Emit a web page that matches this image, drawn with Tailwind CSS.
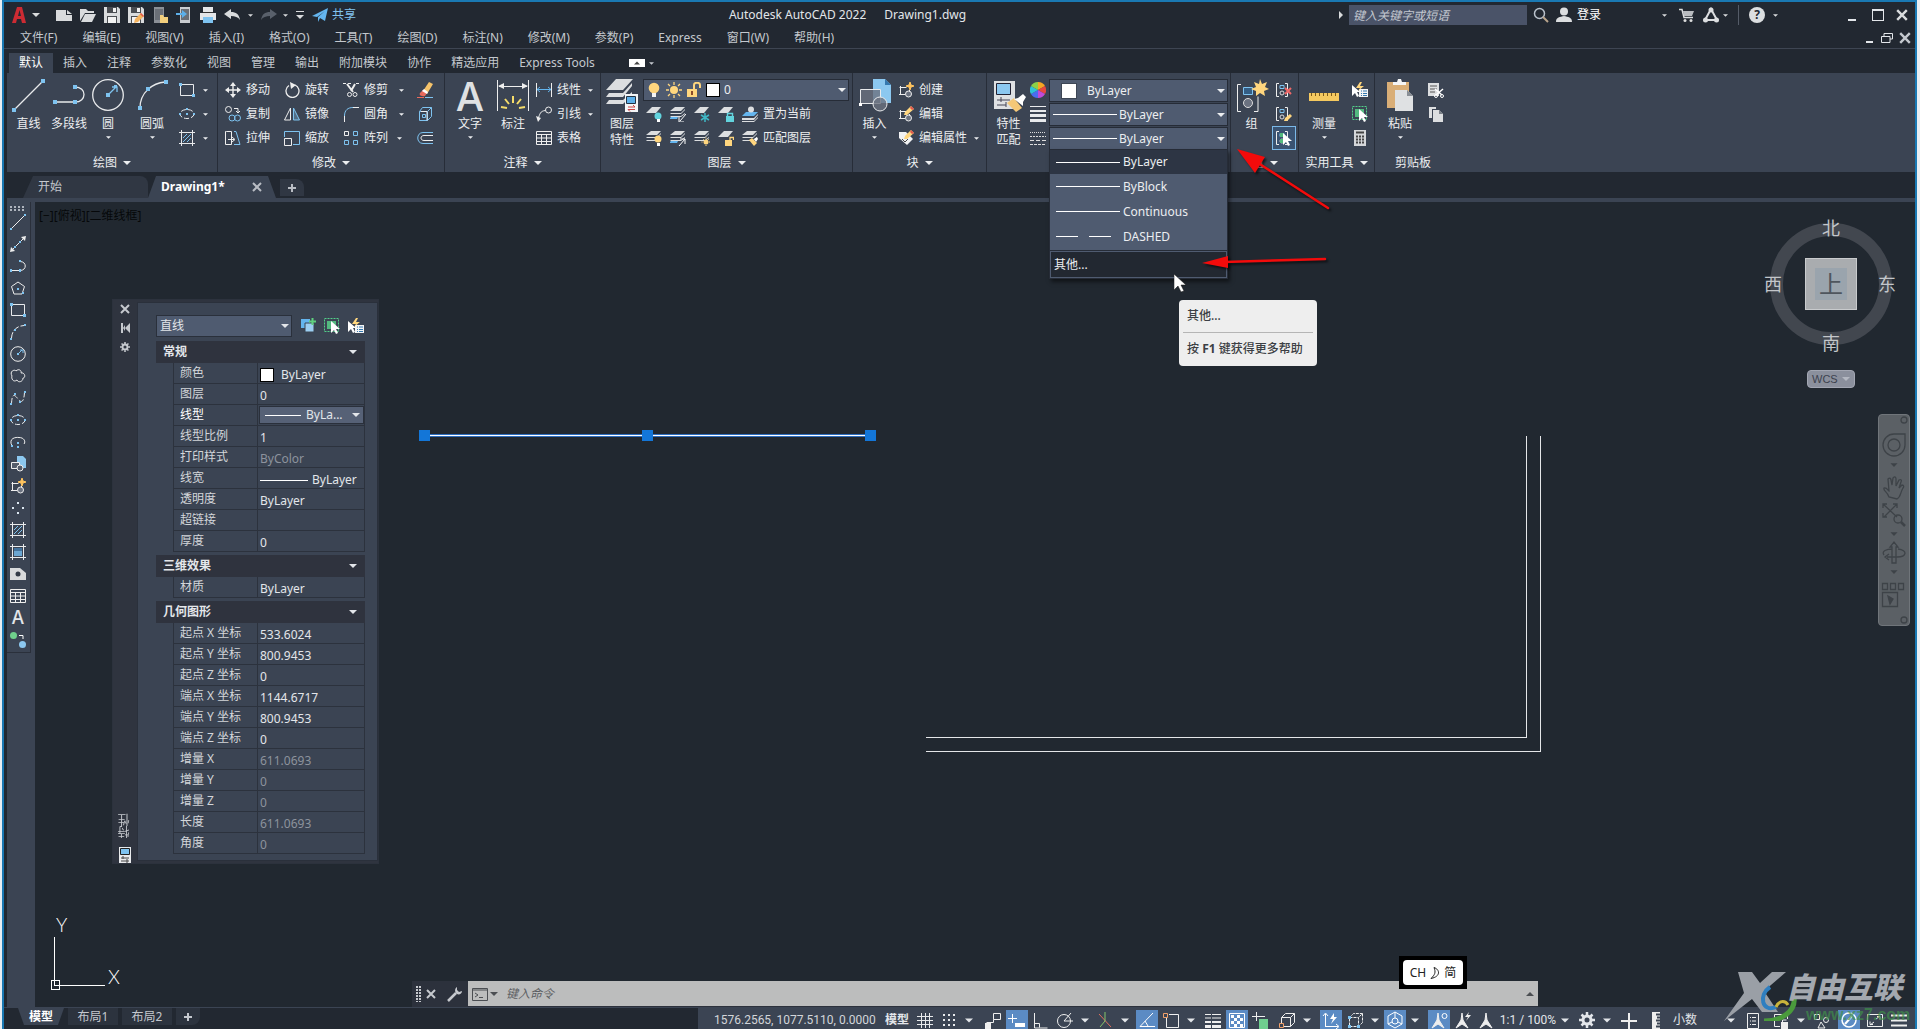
<!DOCTYPE html>
<html lang="zh-CN">
<head>
<meta charset="utf-8">
<title>Autodesk AutoCAD 2022 - Drawing1.dwg</title>
<script src="https://cdn.jsdelivr.net/npm/@tailwindcss/browser@4"></script>
</head>
<body class="bg-[#e9eef2] fill-none font-['Noto_Sans','Noto_Sans_CJK_SC',sans-serif] text-xs leading-4 text-[#e3e6ea]">
<!-- icon library -->
<svg class="hidden" aria-hidden="true">
  <defs>
    <linearGradient id="grad" x1="0" y1="0" x2="0" y2="1"><stop offset="0" stop-color="#3c6f9c"/><stop offset="1" stop-color="#8ec8ee"/></linearGradient>
    <symbol id="caret" viewBox="0 0 8 4"><path d="M0 0h8L4 4z" fill="currentColor"/></symbol>
    <symbol id="x" viewBox="0 0 10 10"><path d="M1 1l8 8M9 1l-8 8" stroke="currentColor" stroke-width="2"/></symbol>
    <symbol id="plus" viewBox="0 0 10 10"><path d="M5 1v8M1 5h8" stroke="currentColor" stroke-width="2"/></symbol>
    <symbol id="new" viewBox="0 0 16 16"><path d="M0 3h10v5h6v6H0zM11 3l5 4h-5z" fill="#d9dbdd"/></symbol>
    <symbol id="open" viewBox="0 0 16 16"><path d="M0 14V2h6l2 2h6v2H5z" fill="#d9dbdd"/><path d="M5 7h11l-4 8H1z" fill="#d9dbdd"/></symbol>
    <symbol id="save" viewBox="0 0 16 16"><path d="M0 0h14l2 2v14H0z" fill="#d9dbdd"/><path d="M3 0h10v6H3zM3 9h10v7H3z" fill="#4a4d52"/><path d="M9 1h3v4H9zM4 10h8v6H4z" fill="#f2f2f2"/></symbol>
    <symbol id="saveas" viewBox="0 0 16 16"><use href="#save"/><path d="M6 16l1-4 6-6 3 3-6 6z" fill="#f5b35e"/><path d="M13 6l3 3-1 1-3-3z" fill="#e2574c"/></symbol>
    <symbol id="sheet" viewBox="0 0 16 16"><path d="M2 0h10v16H2z" fill="#8b9097"/><path d="M3 2h8v11H3z" fill="#6a6f77"/><path d="M8 8h3l1 2h4v6H8z" fill="#f3cf7d"/></symbol>
    <symbol id="mobile" viewBox="0 0 16 16"><path d="M4 0h10v16H4z" fill="#c9ccd0"/><path d="M5 2h8v11H5z" fill="#6a6f77"/><path d="M0 6h6V3l5 4-5 4V8H0z" fill="#5db0ea"/></symbol>
    <symbol id="print" viewBox="0 0 16 16"><path d="M3 0h10v5H3zM0 6h16v7H0z" fill="#e4e6e8"/><path d="M3 5h10v1H3z" fill="#333"/><path d="M3 10h10v6H3z" fill="#7ec3f0"/></symbol>
    <symbol id="undo" viewBox="0 0 16 16"><path d="M0 7l7-5v3c5 0 8 2 9 8-2-3-5-4-9-4v3z" fill="currentColor"/></symbol>
    <symbol id="plane" viewBox="0 0 16 16"><path d="M0 9L16 1l-3 13-5-3-2 4v-5l7-6-8 6z" fill="#64b5ee"/></symbol>
    <symbol id="line" viewBox="0 0 34 34"><path d="M3 31L31 3" stroke="#e8eaec" stroke-width="1.3"/><path d="M0 30h4v4H0zM29 1h4v4h-4z" fill="#7ec3f0"/></symbol>
    <symbol id="pline" viewBox="0 0 34 34"><path d="M3 24h20M23 9c12 0 12 15 0 15" stroke="#e8eaec" stroke-width="1.3"/><path d="M1 22h4v4H1zM21 7h4v4h-4zM21 22h4v4h-4z" fill="#7ec3f0"/></symbol>
    <symbol id="circle" viewBox="0 0 34 34"><circle cx="17" cy="17" r="15.3" stroke="#e8eaec" stroke-width="1.3"/><path d="M17 17l8-8M21 9h5v5" stroke="#7ec3f0" stroke-width="1.3"/><path d="M15 15h4v4h-4zM23 7h3v3h-3z" fill="#7ec3f0"/></symbol>
    <symbol id="arc" viewBox="0 0 34 34"><path d="M5 30C5 14 18 5 30 4" stroke="#e8eaec" stroke-width="1.3"/><path d="M3 28h4v4H3zM11 9h4v4h-4zM29 2h4v4h-4z" fill="#7ec3f0"/></symbol>
    <symbol id="rect" viewBox="0 0 16 16"><path d="M1.500 4V13.500H13M3 2.500H14.500V12" stroke="#e8eaec"/><path d="M0 1h3v3H0zM13 12h3v3h-3z" fill="#7ec3f0"/></symbol>
    <symbol id="ell" viewBox="0 0 16 16"><ellipse cx="8" cy="8" rx="7" ry="4.500" stroke="#e8eaec" stroke-dasharray="5 2"/><path d="M7 7h2v2H7zM0 7h2v2H0zM14 7h2v2h-2zM7 2h2v2H7z" fill="#7ec3f0"/></symbol>
    <symbol id="hatch" viewBox="0 0 16 16"><path d="M2.500 0v16M13.500 0v16M0 2.500h16M0 13.500h16" stroke="#e8eaec"/><path d="M4 8l4-4M4 12l8-8M8 12l4-4" stroke="#7ec3f0"/></symbol>
    <symbol id="move" viewBox="0 0 16 16"><path d="M8 2v12M2 8h12" stroke="#eee" stroke-width="1.400"/><path d="M8 0l3 4H5zM8 16l3-4H5zM0 8l4-3v6zM16 8l-4-3v6z" fill="#eee"/></symbol>
    <symbol id="rot" viewBox="0 0 16 16"><path d="M5 3.500A6.500 6.500 0 1 0 11 3" stroke="#eee" stroke-width="1.300"/><path d="M6 0l6 3-5 4z" fill="#eee"/></symbol>
    <symbol id="trim" viewBox="0 0 16 16"><path d="M0 1.500h3M5 1.500h3M13 1.500h3" stroke="#eee"/><path d="M4 2l6 8M12 2L8 9" stroke="#eee" stroke-width="2"/><circle cx="6.500" cy="12.500" r="2" stroke="#eee"/><circle cx="12" cy="12.500" r="2" stroke="#eee"/></symbol>
    <symbol id="erase" viewBox="0 0 16 16"><path d="M6 9l6-9 4 2-6 10z" fill="#f5c36a"/><path d="M6 8l4 3-2 3c-5 1-6-2-5-3z" fill="#e86a5c"/><path d="M5 9l5 3 1-2-4-3z" fill="#fff"/><path d="M0 15.500h7" stroke="#e86a5c"/><path d="M8 15.500h8" stroke="#7ec3f0"/></symbol>
    <symbol id="copy" viewBox="0 0 16 16"><circle cx="3.500" cy="3.500" r="3" stroke="#eee"/><circle cx="7" cy="12" r="3" stroke="#7ec3f0"/><circle cx="12.500" cy="12" r="3" stroke="#7ec3f0"/><path d="M9 2.500h4V6M11 5l2 2 2-2" stroke="#eee"/></symbol>
    <symbol id="mirror" viewBox="0 0 16 16"><path d="M6.500 2v12h-6z" stroke="#eee"/><path d="M9.500 2v12h6z" stroke="#7ec3f0" fill="#7ec3f055"/></symbol>
    <symbol id="fillet" viewBox="0 0 16 16"><path d="M1.500 10v6M10 1.500h6" stroke="#eee"/><path d="M1.500 10C1.500 4 5 1.500 10 1.500" stroke="#7ec3f0"/></symbol>
    <symbol id="explode" viewBox="0 0 16 16"><path d="M2.500 5.500h8v9h-8zM2.500 5.500l3-4h9l-4 4M14.500 1.500v9l-4 4M5.500 8.500h3v3h-3z" stroke="#7ec3f0"/><path d="M4 5.500h6v9" stroke="#eee"/></symbol>
    <symbol id="stretch" viewBox="0 0 16 16"><path d="M1.500 1.500h5v13h-6v-13zM3 9.500h6M7 7l3 2.500L7 12" stroke="#eee"/><path d="M9 1.500h2l4 13H9" stroke="#7ec3f0"/></symbol>
    <symbol id="scale" viewBox="0 0 16 16"><path d="M.5 8.500h7v7h-7z" stroke="#eee"/><path d="M.5 7V1.500h15v13H9" stroke="#7ec3f0"/></symbol>
    <symbol id="array" viewBox="0 0 16 16"><path d="M1.500 1.500h4v4h-4z" stroke="#eee"/><path d="M10.500 1.500h4v4h-4zM1.500 10.500h4v4h-4zM10.500 10.500h4v4h-4z" stroke="#7ec3f0"/></symbol>
    <symbol id="offset" viewBox="0 0 16 16"><path d="M16 2.500H6c-7 0-7 11 0 11h10" stroke="#7ec3f0"/><path d="M16 5.500H7c-4 0-4 5 0 5h9" stroke="#eee"/></symbol>
    <symbol id="dim" viewBox="0 0 34 34"><path d="M1.500 2v31M32.500 2v31M3 8.500h28" stroke="#eee"/><path d="M2 8l6-3v6zM32 8l-6-3v6z" fill="#eee"/><path d="M17 18v7M9 21l4 5M25 21l-4 5M5 29l6 1M29 29l-6 1" stroke="#f5dc6a" stroke-width="2"/></symbol>
    <symbol id="linear" viewBox="0 0 16 16"><path d="M.5 1v14M15.500 1v14" stroke="#eee"/><path d="M1 7.500h14M4 5L1 7.500 4 10M12 5l3 2.500-3 2.500" stroke="#64b5ee"/></symbol>
    <symbol id="leader" viewBox="0 0 16 16"><circle cx="12.500" cy="4" r="3" stroke="#eee"/><path d="M9.500 4.500C4 5 4 8 2 13" stroke="#eee"/><path d="M0 10l2 6 3-4z" fill="#eee"/></symbol>
    <symbol id="table" viewBox="0 0 16 16"><path d="M.5 1.500h15v13H.5zM.5 4.500h15M.5 8h15M.5 11.500h15M5.500 4v11M10.500 4v11" stroke="#eee"/></symbol>
    <symbol id="layers" viewBox="0 0 34 34"><path d="M11 1h17L18 12H1zM1 19l3-4h14l9-10v3L18 19zM1 26l3-4h14l9-8v3L18 26z" fill="#dcdee0"/><path d="M20 16h13v18H20z" fill="#f4f5f6"/><path d="M21.500 18.500h9v7h-9z" fill="#5db0ea" stroke="#234"/><path d="M23 29h7l-2-2M30 31.500h-7l2 2" stroke="#c44"/></symbol>
    <symbol id="bulb" viewBox="0 0 16 16"><circle cx="8" cy="6" r="5.300" fill="#ffd67e"/><path d="M6 11h4v4H6z" fill="#f4f4f4"/></symbol>
    <symbol id="sun" viewBox="0 0 16 16"><circle cx="8" cy="8" r="4" fill="#ffd67e"/><path d="M8 0v3M8 13v3M0 8h3M13 8h3M2 2l2 2M12 12l2 2M14 2l-2 2M4 12l-2 2" stroke="#ffd67e" stroke-width="1.300"/></symbol>
    <symbol id="unlock" viewBox="0 0 16 16"><path d="M8 7V3c0-3 6-3 6 0v3" stroke="#ffd67e" stroke-width="2"/><path d="M1 7h10v8H1z" fill="#ffd67e"/><path d="M5 9h2v4H5z" fill="#8a4b2a"/></symbol>
    <symbol id="one" viewBox="0 0 16 16"><path d="M6 1h9l-5 6H0z" fill="#dcdee0"/></symbol>
    <symbol id="three" viewBox="0 0 16 16"><path d="M5 1h10l-4 4H0zM0 8l1-1h10l4-4v1l-4 4zM0 11l1-1h10l4-3v1l-4 3z" fill="#dcdee0"/></symbol>
    <symbol id="l1" viewBox="0 0 16 16"><use href="#one"/><circle cx="12" cy="10" r="3.500" fill="#62d3dd"/><path d="M11 13h3v3h-3z" fill="#fff"/></symbol>
    <symbol id="l2" viewBox="0 0 16 16"><use href="#three"/><path d="M0 12l1-1h7l-1 2H0z" fill="#64b5ee"/><path d="M16 8l-6 7M9 11v5h5" stroke="#fff"/></symbol>
    <symbol id="l3" viewBox="0 0 16 16"><use href="#one"/><path d="M11 7v9M7 9l8 5M15 9l-8 5" stroke="#3fb8c6" stroke-width="1.500"/></symbol>
    <symbol id="l4" viewBox="0 0 16 16"><use href="#one"/><path d="M8 10h8v6H8z" fill="#62d3dd"/><path d="M9.500 10V7.500h5V10" stroke="#62d3dd" stroke-width="1.400"/></symbol>
    <symbol id="l5" viewBox="0 0 16 16"><path d="M4 6h12l-4 4H0z" fill="#64b5ee"/><circle cx="9" cy="3.500" r="3" fill="#dcdee0"/><path d="M0 12h12l4-4v1l-4 5H0zM0 15h12l4-4v1l-4 4H0z" fill="#dcdee0"/></symbol>
    <symbol id="l6" viewBox="0 0 16 16"><use href="#three"/><circle cx="12" cy="9" r="3.500" fill="#ffd67e"/><path d="M11 13h3v3h-3z" fill="#fff"/></symbol>
    <symbol id="l7" viewBox="0 0 16 16"><use href="#three"/><path d="M0 12l1-1h7l-1 2H0z" fill="#64b5ee"/><path d="M9 16l6-7M10 9h5v5" stroke="#fff"/></symbol>
    <symbol id="l8" viewBox="0 0 16 16"><use href="#three"/><circle cx="12" cy="12" r="2.500" fill="#ffd67e"/><path d="M12 7.500v1M12 15v1M7.500 12h1M15 12h1M9 9l.7.7M15 9l-.7.7" stroke="#ffd67e"/></symbol>
    <symbol id="l9" viewBox="0 0 16 16"><use href="#one"/><path d="M7 10h7v6H7z" fill="#ffd67e"/><path d="M12 10V7.500h3.500V10" stroke="#ffd67e" stroke-width="1.300"/></symbol>
    <symbol id="l10" viewBox="0 0 16 16"><use href="#three"/><path d="M7 10l3-2 5 5-3 3z" fill="#ffd67e"/><path d="M12 9l3-2 1 2-2 3z" fill="#fff"/></symbol>
    <symbol id="insert" viewBox="0 0 34 34"><path d="M15 1h12l6 6v18H15z" fill="#8cc8f0"/><path d="M27 1l6 6h-6z" fill="#3579b0"/><path d="M2.500 11.500h20v14h-20z" fill="#6b7280cc" stroke="#e8eaec"/><circle cx="22" cy="26" r="7" fill="#6b7280cc" stroke="#e8eaec"/><path d="M1 25h3v3H1z" fill="#fff"/></symbol>
    <symbol id="block" viewBox="0 0 16 16"><path d="M1.500 5.500h7M2.500 4v9M1 12.500h6M11.500 8v3" stroke="#eee"/><circle cx="10.500" cy="12" r="3" fill="#6b7280" stroke="#eee"/></symbol>
    <symbol id="create" viewBox="0 0 16 16"><use href="#block"/><path d="M12 0l1 3 3 1-3 1-1 3-1-3-3-1 3-1z" fill="#ffc45e" stroke="#ffc45e"/></symbol>
    <symbol id="editb" viewBox="0 0 16 16"><use href="#block"/><path d="M6 9l1-3 6-6 3 3-7 6z" fill="#ffd67e"/><path d="M13 0l3 3-2 1-2-2z" fill="#e2574c"/></symbol>
    <symbol id="attr" viewBox="0 0 16 16"><path d="M1 2h7l7 7-6 6-8-7z" fill="#f1f2f3"/><path d="M4 9l3 3 3-3" stroke="#444"/><path d="M6 9l1-3 6-6 3 3-7 6z" fill="#ffd67e"/><path d="M13 0l3 3-2 1-2-2z" fill="#e2574c"/></symbol>
    <symbol id="match" viewBox="0 0 34 34"><path d="M2 3h21v28H2z" fill="#dfe1e3"/><path d="M4.500 5.500h14v11h-14z" fill="#8cc8f0" stroke="#223"/><path d="M5 22h13M5 27h9M9 19v5M14 24v5" stroke="#445"/><path d="M15 25l7-5 8 10-6 4z" fill="#f5c878"/><path d="M22 21l4-1 5-4 3 3-3 5v4z" fill="#fff"/></symbol>
    <symbol id="wheel" viewBox="0 0 16 16"><path d="M8 8V0a8 8 0 0 1 7 4z" fill="#f5a623"/><path d="M8 8l7-4a8 8 0 0 1 0 8z" fill="#e8473f"/><path d="M8 8l7 4a8 8 0 0 1-7 4z" fill="#c04bd8"/><path d="M8 8v8a8 8 0 0 1-7-4z" fill="#4a6df0"/><path d="M8 8l-7 4a8 8 0 0 1 0-8z" fill="#2fc3d8"/><path d="M8 8L1 4a8 8 0 0 1 7-4z" fill="#8bd048"/></symbol>
    <symbol id="lw" viewBox="0 0 16 16"><path d="M0 .5h16" stroke="#e8eaec"/><path d="M0 5h16" stroke="#e8eaec" stroke-width="2"/><path d="M0 9.500h16" stroke="#e8eaec" stroke-width="3"/><path d="M0 14.500h16" stroke="#e8eaec" stroke-width="3"/></symbol>
    <symbol id="lt" viewBox="0 0 16 16"><path d="M0 2.500h16" stroke="#ddd" stroke-dasharray="1 1"/><path d="M0 6.500h16" stroke="#ddd" stroke-dasharray="2 1"/><path d="M0 10.500h16" stroke="#ddd" stroke-dasharray="4 2"/><path d="M0 14.500h16" stroke="#ddd" stroke-dasharray="3 1"/></symbol>
    <symbol id="group" viewBox="0 0 34 34"><path d="M6 6.500H2.500v27H6M19 33.500h4v-15" stroke="#eee"/><path d="M8.500 9.500h9v7h-9z" fill="#345e85" stroke="#7ec3f0"/><circle cx="13" cy="25" r="4.500" fill="#6b7280" stroke="#ddd"/><path d="M25 1l2 5 5-2-2 5 4 2-5 2 1 5-5-3-4 3v-5l-5-2 5-2-2-5 5 2z" fill="#ffd67e"/></symbol>
    <symbol id="grp" viewBox="0 0 16 16"><path d="M3 1.500H.5v13H3M9 1.500h2.500v13H9" stroke="#eee"/><path d="M4 3.500h4v3H4z" stroke="#7ec3f0"/><circle cx="6" cy="11" r="2" stroke="#ddd"/></symbol>
    <symbol id="ungrp" viewBox="0 0 16 16"><use href="#grp"/><path d="M9 6l6 6M15 6l-6 6" stroke="#f06868" stroke-width="2"/></symbol>
    <symbol id="grped" viewBox="0 0 16 16"><use href="#grp"/><path d="M8 15l1-3 5-4 2 2-5 5z" fill="#ffd67e"/></symbol>
    <symbol id="arrow" viewBox="0 0 16 16"><path d="M7 3v12l3-3 2 4 2-1-2-4h4z" fill="#fff"/></symbol>
    <symbol id="grpsel" viewBox="0 0 16 16"><use href="#grp"/><path d="M4 3h4v4H4zM4 9h4v4H4z" fill="#53b97f"/><use href="#arrow"/></symbol>
    <symbol id="ruler" viewBox="0 0 34 34"><path d="M2 15h30v8H2z" fill="#f5c95f"/><path d="M4.500 15v3M8.500 15v3M12.500 15v3M16.500 15v3M20.500 15v3M24.500 15v3M28.500 15v3" stroke="#7c5a1c"/></symbol>
    <symbol id="qsel" viewBox="0 0 16 16"><path d="M7 7h9v8H7z" fill="#f4f5f6"/><path d="M9 9h1M11 9h4M9 11.500h1M11 11.500h4M9 13.500h1M11 13.500h4" stroke="#3579b0"/><path d="M8 0L4 6h4L6 9l6-5H8l2-4z" fill="#ffd67e"/><path d="M0 3v11l3-3 2 4 2-1-2-4h3z" fill="#fff"/></symbol>
    <symbol id="selall" viewBox="0 0 16 16"><path d="M.5 .5h14v13H.5z" stroke="#53d08a" stroke-dasharray="2 1"/><path d="M3 3h9v8H3z" fill="#53b97f"/><use href="#arrow"/></symbol>
    <symbol id="calc" viewBox="0 0 16 16"><path d="M2 0h12v16H2z" fill="#d5d7da"/><path d="M4 2.500h8" stroke="#444" stroke-width="2"/><path d="M4 6.500h8M4 9.500h8M4 12.500h8" stroke="#444" stroke-width="2" stroke-dasharray="2 1"/></symbol>
    <symbol id="paste" viewBox="0 0 34 34"><path d="M4 4h22v26H4z" fill="#d9ae77"/><path d="M10 7V4h4l1-3h3l1 3h4v3z" fill="#f4f5f6"/><path d="M12 12h12l6 6v15H12z" fill="#dfe1e3"/><path d="M24 12l6 6h-6z" fill="#8a8f96"/></symbol>
    <symbol id="cut" viewBox="0 0 16 16"><path d="M0 1h11v13H0z" fill="#dcdee0"/><path d="M2 4h7M2 7h7M2 10h5" stroke="#555"/><path d="M7 7l7 6M15 7l-7 6" stroke="#fff" stroke-width="1.500"/><circle cx="8" cy="14" r="1.500" stroke="#fff"/><circle cx="14" cy="14" r="1.500" stroke="#fff"/></symbol>
    <symbol id="clip" viewBox="0 0 16 16"><path d="M1 1h7v2H4v9H1z" fill="#dcdee0"/><path d="M5 4h6l4 4v8H5z" fill="#dcdee0"/><path d="M11 4l4 4h-4z" fill="#7a8088"/></symbol>
    <!-- draw toolbar -->
    <symbol id="t1" viewBox="0 0 16 16"><path d="M1.500 14.500l13-13" stroke="#eee"/><path d="M0 14h2v2H0zM14 0h2v2h-2z" fill="#7ec3f0"/></symbol>
    <symbol id="t2" viewBox="0 0 16 16"><path d="M2 14L14 2" stroke="#eee"/><path d="M0 16l1-5 4 4zM16 0l-5 1 4 4z" fill="#eee"/><path d="M4 10h2v2H4zM9 5h2v2H9z" fill="#7ec3f0"/></symbol>
    <symbol id="t3" viewBox="0 0 16 16"><path d="M1 12.500h9M10 3.500c7 0 7 9 0 9" stroke="#eee"/><path d="M0 11h2v3H0zM9 2h2v2H9zM9 11h2v3H9z" fill="#7ec3f0"/></symbol>
    <symbol id="t4" viewBox="0 0 16 16"><path d="M8 2l6.500 4.500L12 14H4L1.500 6.500z" stroke="#eee"/><path d="M7 8h2v2H7zM12 12h2v2h-2z" fill="#7ec3f0"/></symbol>
    <symbol id="t6" viewBox="0 0 16 16"><path d="M1.500 14C2 6 7 2 14 1.500" stroke="#eee" stroke-dasharray="6 2"/><path d="M0 14h2v2H0zM14 0h2v2h-2zM4 5h2v2H4z" fill="#7ec3f0"/></symbol>
    <symbol id="t7" viewBox="0 0 16 16"><circle cx="8" cy="8" r="7.300" stroke="#eee"/><path d="M8 8l4-4M10 4h3v3" stroke="#7ec3f0"/><path d="M7 7h2v2H7z" fill="#7ec3f0"/></symbol>
    <symbol id="t8" viewBox="0 0 16 16"><path d="M2 8C-1 3 5 1 6 3c3-3 6 0 5 2 4-1 5 5 2 5 0 4-5 5-6 2-4 3-6-2-5-4z" stroke="#eee"/></symbol>
    <symbol id="t9" viewBox="0 0 16 16"><path d="M1.500 14C2 2 5 5 8 9s6 4 6.500-7" stroke="#eee" stroke-dasharray="6 2"/><path d="M0 13h2v2H0zM4 3h2v2H4zM9 11h2v2H9zM14 1h2v2h-2z" fill="#7ec3f0"/></symbol>
    <symbol id="t11" viewBox="0 0 16 16"><path d="M2 12C-2 4 6 3 9 3.500c5 0 7 4 5 6.500" stroke="#eee"/><path d="M7 8h2v2H7zM7 12h2v2H7zM1 11h2v2H1z" fill="#7ec3f0"/></symbol>
    <symbol id="t12" viewBox="0 0 16 16"><path d="M7 0h6l3 3v9H7z" fill="#8cc8f0"/><path d="M1.500 6.500h8v6h-8z" fill="#555d6b" stroke="#eee"/><circle cx="10" cy="12" r="3" fill="#555d6b" stroke="#eee"/></symbol>
    <symbol id="t14" viewBox="0 0 16 16"><path d="M7 2h2v2H7zM2 7h2v2H2zM12 7h2v2h-2zM7 12h2v2H7z" fill="#dbe7f0"/></symbol>
    <symbol id="t16" viewBox="0 0 16 16"><path d="M4 4h8v8H4z" fill="#6ba6d2"/><path d="M4 4h8v3H4z" fill="#42729c"/><path d="M2.500 0v16M13.500 0v16M0 2.500h16M0 13.500h16" stroke="#e8eaec"/></symbol>
    <symbol id="t17" viewBox="0 0 16 16"><path d="M0 2h10l6 5v7H0z" fill="#d9dbdd"/><circle cx="8" cy="8" r="2.500" fill="#333b48"/></symbol>
    <symbol id="t20" viewBox="0 0 16 16"><circle cx="3.500" cy="3.500" r="3.500" fill="#6fd08c"/><circle cx="12.500" cy="12.500" r="3.500" fill="#8cc8f0"/><path d="M9 3.500h4V7" stroke="#fff"/></symbol>
    <!-- palette and window glyphs -->
    <symbol id="tog" viewBox="0 0 16 16"><path d="M1 1h9v9H1z" fill="#64b5ee"/><path d="M5 5h9v9H5z" fill="#9ccff2" stroke="#3b4453"/><path d="M12.500 0v7M9 3.500h7" stroke="#5fd07f" stroke-width="2"/></symbol>
    <symbol id="gear" viewBox="0 0 16 16"><circle cx="8" cy="8" r="4" stroke="currentColor" stroke-width="3"/><path d="M8 0v3M8 13v3M0 8h3M13 8h3M2.500 2.500l2 2M11.500 11.500l2 2M13.500 2.500l-2 2M4.500 11.500l-2 2" stroke="currentColor" stroke-width="2.500"/></symbol>
    <symbol id="search" viewBox="0 0 16 16"><circle cx="6.500" cy="6.500" r="5" stroke="#b9c2cc" stroke-width="1.500"/><path d="M10 10l5 5" stroke="#b9a48c" stroke-width="2"/></symbol>
    <symbol id="user" viewBox="0 0 16 16"><circle cx="8" cy="4.500" r="4" fill="#dcdee0"/><path d="M0 15c0-5 4-5 8-6 4 1 8 1 8 6z" fill="#dcdee0"/></symbol>
    <symbol id="cart" viewBox="0 0 16 16"><path d="M0 2.500h3l2 8h9" stroke="#dcdee0" stroke-width="1.500"/><path d="M4 4h11l-2 5H5z" fill="#b9bcc0"/><circle cx="6" cy="13.500" r="1.500" fill="#ddd"/><circle cx="12" cy="13.500" r="1.500" fill="#ddd"/></symbol>
    <symbol id="app" viewBox="0 0 16 16"><path d="M8 2L2 13h12z" stroke="#dcdee0" stroke-width="2"/><circle cx="8" cy="3" r="2.500" fill="#dcdee0"/><circle cx="2.500" cy="13" r="2.500" fill="#dcdee0"/><circle cx="13.500" cy="13" r="2.500" fill="#dcdee0"/></symbol>
    <symbol id="wrench" viewBox="0 0 16 16"><path d="M1 15l8-8" stroke="#c6c9ce" stroke-width="2.500"/><path d="M10 1c-3 2-2 6 0 7s5 0 5-3l-3 1-2-2z" fill="#c6c9ce"/></symbol>
    <!-- status bar glyphs, 22 x 20 -->
    <symbol id="s1" viewBox="0 0 22 20"><path d="M7.500 3v15M11.500 3v15M15.500 3v15M3 6.500h16M3 10.500h16M3 14.500h16" stroke="#e8eaec"/></symbol>
    <symbol id="s2" viewBox="0 0 22 20"><path d="M5 5h14M5 10h14M5 15h14" stroke="#e8eaec" stroke-width="2" stroke-dasharray="2 3"/></symbol>
    <symbol id="s3" viewBox="0 0 22 20"><path d="M11.500 3.500h7v6h-7zM11.500 9.500v3h-7" stroke="#eee"/><path d="M3 13h6v6H3z" fill="#eee"/></symbol>
    <symbol id="s4" viewBox="0 0 22 20"><path d="M6.500 4v9M2 8.500h9" stroke="#fff"/><path d="M9 13h10v4H9z" fill="#fff"/></symbol>
    <symbol id="s5" viewBox="0 0 22 20"><path d="M4.500 3v15h13M4.500 13.500h5v4" stroke="#eee"/></symbol>
    <symbol id="s6" viewBox="0 0 22 20"><circle cx="10" cy="11" r="6.500" stroke="#eee"/><path d="M10 11h9M10 11l7-8" stroke="#eee"/></symbol>
    <symbol id="s7" viewBox="0 0 22 20"><path d="M5 4l12 13" stroke="#e0705e"/><path d="M11 2v9l-5 6" stroke="#84c46a"/></symbol>
    <symbol id="s8" viewBox="0 0 22 20"><path d="M17 3L4 16.500h15M9 11l3 5" stroke="#fff"/></symbol>
    <symbol id="s9" viewBox="0 0 22 20"><path d="M6.500 8v9.500h12v-13H9" stroke="#eee"/><path d="M3.500 3.500h4v4h-4z" stroke="#f0a06a"/></symbol>
    <symbol id="s10" viewBox="0 0 22 20"><path d="M3 4.500h16M3 8h16" stroke="#eee"/><path d="M3 12h16" stroke="#eee" stroke-width="2"/><path d="M3 16.500h16" stroke="#eee" stroke-width="3"/><path d="M9.500 3v16" stroke="#3b4453"/></symbol>
    <symbol id="s11" viewBox="0 0 22 20"><path d="M3.500 3.500h15v14h-15z" stroke="#fff"/><path d="M5 6.500h12M5 12.500h12" stroke="#fff" stroke-width="3" stroke-dasharray="3 3"/><path d="M8 9.500h9M8 15.500h9" stroke="#fff" stroke-width="3" stroke-dasharray="3 3"/></symbol>
    <symbol id="s12" viewBox="0 0 22 20"><path d="M6.500 2v9M2 6.500h13" stroke="#eee"/><path d="M9 9h9v10H9z" fill="#6fcf8f"/></symbol>
    <symbol id="s13" viewBox="0 0 22 20"><path d="M5.500 7.500h9v9h-9zM5.500 7.500l4-4h9l-4 4M18.500 3.500v9l-4 4" stroke="#eee"/><path d="M3.500 13.500h4v4h-4z" stroke="#f0a06a" fill="#3b4453"/></symbol>
    <symbol id="s14" viewBox="0 0 22 20"><path d="M5.500 17V4M3 6l2.500-3L8 6M5 16.500h13M16 14l3 2.500-3 2.500" stroke="#fff"/><path d="M14 3l-4 6h3l-2 5 6-7h-3z" fill="#fff"/></symbol>
    <symbol id="s15" viewBox="0 0 22 20"><path d="M5.500 7.500h9v9h-9zM5.500 7.500l4-4h9l-4 4M18.500 3.500v9l-4 4" stroke="#eee" stroke-dasharray="3 1"/><path d="M4 6h3v3H4zM4 15h3v3H4zM13 15h3v3h-3z" fill="#7ec3f0"/></symbol>
    <symbol id="s16" viewBox="0 0 22 20"><path d="M11 2l7 4v8l-7 4-7-4V6z" stroke="#fff"/><circle cx="11" cy="11" r="3" stroke="#fff"/><path d="M11 2v6M4 14l4-2M18 14l-4-2" stroke="#fff"/></symbol>
    <symbol id="man" viewBox="0 0 22 20"><path d="M10 3l-1 7-5 8 6-4 6 4-5-8z" fill="#eee" stroke="#eee"/></symbol>
    <symbol id="s17" viewBox="0 0 22 20"><use href="#man"/><circle cx="16.500" cy="6" r="2.500" stroke="#fff"/></symbol>
    <symbol id="s18" viewBox="0 0 22 20"><use href="#man"/><path d="M17 2l-4 5h3l-2 4 5-6h-3z" fill="#eee"/></symbol>
    <symbol id="s20" viewBox="0 0 22 20"><path d="M11 3v16M3 11h16" stroke="#eee" stroke-width="2"/></symbol>
    <symbol id="s21" viewBox="0 0 22 20"><path d="M8 2h8v17H8z" fill="#eee"/><path d="M12 4.500h4M13 7.500h3M12 10.500h4M13 13.500h3M12 16.500h4" stroke="#3b4453" stroke-width="2"/></symbol>
    <symbol id="s22" viewBox="0 0 22 20"><path d="M5.500 3.500h11v15h-11zM8 7.500h1M10 7.500h4M8 11h1M10 11h4M8 14.500h1M10 14.500h4" stroke="#eee"/></symbol>
    <symbol id="s23" viewBox="0 0 22 20"><path d="M10 16.500H4.500v-12h13V9" stroke="#eee"/><path d="M11 12h7v7h-7z" fill="#eee"/><path d="M12.500 12v-2h4" stroke="#eee"/></symbol>
    <symbol id="s24" viewBox="0 0 22 20"><path d="M4.500 4.500h5v5h-5zM11 12l4 6H8z" stroke="#eee"/><circle cx="16" cy="10" r="2.500" stroke="#eee"/></symbol>
    <symbol id="s25" viewBox="0 0 22 20"><circle cx="11" cy="10" r="7" stroke="#fff" stroke-width="1.500"/><path d="M7 14l7-8" stroke="#fff" stroke-width="2"/></symbol>
    <symbol id="s26" viewBox="0 0 22 20"><path d="M3.500 4.500h15v12h-15zM12 9l4-3M13 6.500h3v3M10 12l-4 3M9 14.500H6v-3" stroke="#eee"/></symbol>
    <symbol id="s27" viewBox="0 0 22 20"><path d="M3 5.500h16M3 10.500h16M3 15.500h16" stroke="#eee" stroke-width="2"/></symbol>
  </defs>
</svg>

<div class="ml-0.5 mr-[3px] flex h-screen flex-col overflow-hidden border-x-2 border-t-2 border-[#1a79b3] bg-[#222831]">

  <!-- title bar -->
  <header class="flex h-[26px] shrink-0 items-center justify-between">
    <div class="flex items-center pl-2 text-[#d9dbdd]">
      <button class="flex items-center gap-1" aria-label="应用程序菜单"><svg class="size-4" viewBox="0 0 16 16"><path d="M0 16L5 0h5l4 16h-4l-1-4H5l-1 4zM6 9h3L7.500 3z" fill="#cc2b33" fill-rule="evenodd"/></svg><svg class="h-1 w-2"><use href="#caret"/></svg></button>
      <div class="ml-4 flex gap-2 [&_svg]:size-4">
        <button aria-label="新建"><svg><use href="#new"/></svg></button>
        <button aria-label="打开"><svg><use href="#open"/></svg></button>
        <button aria-label="保存"><svg><use href="#save"/></svg></button>
        <button aria-label="另存为"><svg><use href="#saveas"/></svg></button>
        <button aria-label="从 Web 打开"><svg><use href="#sheet"/></svg></button>
        <button aria-label="保存到 Web"><svg><use href="#mobile"/></svg></button>
        <button aria-label="打印"><svg><use href="#print"/></svg></button>
        <button aria-label="放弃"><svg><use href="#undo"/></svg></button>
      </div>
      <svg class="ml-2 h-[3px] w-[5px]"><use href="#caret"/></svg>
      <button class="ml-2 text-[#59606b]" aria-label="重做"><svg class="size-4 -scale-x-100"><use href="#undo"/></svg></button>
      <svg class="ml-1.5 h-[3px] w-[5px]"><use href="#caret"/></svg>
      <button class="ml-2 border-t border-[#d9dbdd] pt-[3px]" aria-label="自定义"><svg class="h-1 w-2"><use href="#caret"/></svg></button>
      <button class="ml-2 flex items-center gap-1 text-[#82c4f0]"><svg class="size-4"><use href="#plane"/></svg>共享</button>
    </div>
    <h1 class="flex gap-[18px]"><span>Autodesk AutoCAD 2022</span><span>Drawing1.dwg</span></h1>
    <div class="flex items-center pr-[7px] text-[#d9dbdd]">
      <svg class="h-2 w-1" viewBox="0 0 4 8"><path d="M0 0l4 4-4 4z" fill="currentColor"/></svg>
      <input class="ml-1.5 h-5 w-[178px] bg-[#4a5368] px-1 italic outline-none placeholder:text-[#c3c8d0]" placeholder="键入关键字或短语" aria-label="搜索">
      <svg class="ml-1.5 size-4"><use href="#search"/></svg>
      <button class="ml-[7px] flex items-center gap-[5px] text-white"><svg class="size-4"><use href="#user"/></svg>登录</button>
      <svg class="ml-[61px] h-[3px] w-[5px]"><use href="#caret"/></svg>
      <svg class="ml-3 size-4"><use href="#cart"/></svg>
      <svg class="ml-2 size-4"><use href="#app"/></svg>
      <svg class="ml-1 h-[3px] w-[5px]"><use href="#caret"/></svg>
      <span class="ml-2.5 h-5 w-px bg-[#555c68]"></span>
      <button class="ml-2.5 size-4 rounded-full bg-[#dcdee0] text-center font-bold leading-4 text-[#222831]">?</button>
      <svg class="ml-2 h-[3px] w-[5px]"><use href="#caret"/></svg>
      <button class="ml-[70px] mt-[9px] h-0.5 w-2 bg-[#e3e6ea]" aria-label="最小化"></button>
      <button class="ml-4 size-3 border border-t-2 border-[#e3e6ea]" aria-label="最大化"></button>
      <button class="ml-3" aria-label="关闭"><svg class="size-3"><use href="#x"/></svg></button>
    </div>
  </header>

  <!-- menu bar -->
  <nav class="flex h-[21px] shrink-0 items-center border-b border-[#3e4552] pl-4 pr-1 text-[#c4c8ce]">
    <div class="flex gap-[25px]">
      <a href="#">文件(F)</a><a href="#">编辑(E)</a><a href="#">视图(V)</a><a href="#">插入(I)</a><a href="#">格式(O)</a><a href="#">工具(T)</a><a href="#">绘图(D)</a><a href="#">标注(N)</a><a href="#">修改(M)</a><a href="#">参数(P)</a><a href="#">Express</a><a href="#">窗口(W)</a><a href="#">帮助(H)</a>
    </div>
    <button class="ml-auto mt-2 h-0.5 w-[7px] bg-[#e3e6ea]" aria-label="最小化图形"></button>
    <button class="ml-2" aria-label="还原图形"><svg class="size-3" viewBox="0 0 12 12" stroke="#e3e6ea"><path d="M3 4V1.500h8.500V7H9M.5 4.500H9v6H.5z"/></svg></button>
    <button class="ml-1.5" aria-label="关闭图形"><svg class="size-3"><use href="#x"/></svg></button>
  </nav>

  <!-- ribbon tabs -->
  <nav class="mt-1 flex h-5 shrink-0 items-center pl-[5px] text-[#c4c8ce]">
    <a href="#" class="flex h-full items-center bg-[#3b4453] px-2.5 text-white">默认</a>
    <a href="#" class="px-2.5">插入</a><a href="#" class="px-2.5">注释</a><a href="#" class="px-2.5">参数化</a><a href="#" class="px-2.5">视图</a><a href="#" class="px-2.5">管理</a><a href="#" class="px-2.5">输出</a><a href="#" class="px-2.5">附加模块</a><a href="#" class="px-2.5">协作</a><a href="#" class="px-2.5">精选应用</a><a href="#" class="px-2.5">Express Tools</a>
    <button class="ml-6 flex h-2 w-4 items-center justify-center bg-white" aria-label="最小化功能区"><svg class="h-1 w-1.5 rotate-180 text-[#444]"><use href="#caret"/></svg></button>
    <svg class="ml-1 h-[3px] w-[5px]"><use href="#caret"/></svg>
  </nav>

  <!-- ribbon -->
  <div class="relative z-20 ml-[3px] flex h-[99px] shrink-0 bg-[#3b4453] text-[#eceef0] [&_section]:flex [&_section]:flex-col [&_section]:border-r [&_section]:border-[#272d38] [&_h2]:flex [&_h2]:h-[19px] [&_h2]:items-center [&_h2]:justify-center [&_h2]:gap-1.5">
    <section class="w-[211px]">
      <div class="flex h-20 pt-[5px]">
        <button class="flex w-[43px] flex-col items-center"><svg class="size-[34px]"><use href="#line"/></svg><span class="mt-1">直线</span></button>
        <button class="flex w-[38px] flex-col items-center"><svg class="size-[34px]"><use href="#pline"/></svg><span class="mt-1 whitespace-nowrap">多段线</span></button>
        <button class="flex w-10 flex-col items-center"><svg class="size-[34px]"><use href="#circle"/></svg><span class="mt-1">圆</span><svg class="mt-1 h-[3px] w-[5px]"><use href="#caret"/></svg></button>
        <button class="flex w-12 flex-col items-center"><svg class="size-[34px]"><use href="#arc"/></svg><span class="mt-1">圆弧</span><svg class="mt-1 h-[3px] w-[5px]"><use href="#caret"/></svg></button>
        <div class="pl-[3px] [&_button]:flex [&_button]:h-6 [&_button]:items-center [&_button]:gap-2">
          <button aria-label="矩形"><svg class="size-4"><use href="#rect"/></svg><svg class="h-[3px] w-[5px]"><use href="#caret"/></svg></button>
          <button aria-label="椭圆"><svg class="size-4"><use href="#ell"/></svg><svg class="h-[3px] w-[5px]"><use href="#caret"/></svg></button>
          <button aria-label="图案填充"><svg class="size-4"><use href="#hatch"/></svg><svg class="h-[3px] w-[5px]"><use href="#caret"/></svg></button>
        </div>
      </div>
      <h2>绘图<svg class="h-1 w-2"><use href="#caret"/></svg></h2>
    </section>
    <section class="w-[227px]">
      <div class="grid h-20 grid-cols-[59px_59px_74px_20px] content-start pl-[7px] pt-[5px] [&_button]:flex [&_button]:h-6 [&_button]:items-center [&_button]:gap-[5px]">
        <button><svg class="size-4"><use href="#move"/></svg>移动</button><button><svg class="size-4"><use href="#rot"/></svg>旋转</button><button><svg class="size-4"><use href="#trim"/></svg>修剪<svg class="ml-1.5 h-[3px] w-[5px]"><use href="#caret"/></svg></button><button aria-label="删除"><svg class="size-4"><use href="#erase"/></svg></button>
        <button><svg class="size-4"><use href="#copy"/></svg>复制</button><button><svg class="size-4"><use href="#mirror"/></svg>镜像</button><button><svg class="size-4"><use href="#fillet"/></svg>圆角<svg class="ml-1.5 h-[3px] w-[5px]"><use href="#caret"/></svg></button><button aria-label="分解"><svg class="size-4"><use href="#explode"/></svg></button>
        <button><svg class="size-4"><use href="#stretch"/></svg>拉伸</button><button><svg class="size-4"><use href="#scale"/></svg>缩放</button><button><svg class="size-4"><use href="#array"/></svg>阵列<svg class="ml-1 h-[3px] w-[5px]"><use href="#caret"/></svg></button><button aria-label="偏移"><svg class="size-4"><use href="#offset"/></svg></button>
      </div>
      <h2>修改<svg class="h-1 w-2"><use href="#caret"/></svg></h2>
    </section>
    <section class="w-[156px]">
      <div class="flex h-20 pt-[5px]">
        <button class="flex w-[50px] flex-col items-center"><span class="h-[34px] font-['Inter',sans-serif] text-[40px] font-medium leading-[38px] text-[#dfe1e3]">A</span><span class="mt-1">文字</span><svg class="mt-1 h-[3px] w-[5px]"><use href="#caret"/></svg></button>
        <button class="flex w-9 flex-col items-center"><svg class="size-[34px]"><use href="#dim"/></svg><span class="mt-1">标注</span></button>
        <div class="pl-[5px] [&_button]:flex [&_button]:h-6 [&_button]:items-center [&_button]:gap-[5px]">
          <button><svg class="size-4"><use href="#linear"/></svg>线性<svg class="ml-0.5 h-[3px] w-[5px]"><use href="#caret"/></svg></button>
          <button><svg class="size-4"><use href="#leader"/></svg>引线<svg class="ml-0.5 h-[3px] w-[5px]"><use href="#caret"/></svg></button>
          <button><svg class="size-4"><use href="#table"/></svg>表格</button>
        </div>
      </div>
      <h2>注释<svg class="h-1 w-2"><use href="#caret"/></svg></h2>
    </section>
    <section class="w-[252px]">
      <div class="flex h-20 pt-[5px]">
        <button class="flex w-[42px] flex-col items-center"><svg class="size-[34px]"><use href="#layers"/></svg><span class="mt-1">图层</span><span>特性</span></button>
        <div class="w-[206px]">
          <div class="relative mt-px flex h-[22px] items-center border border-[#262c37] bg-[#4f5b70]">
            <select class="h-full w-full appearance-none bg-transparent pl-20 outline-none" aria-label="图层"><option>0</option></select>
            <div class="pointer-events-none absolute inset-0 flex items-center gap-1 pl-0.5 [&_svg]:size-4"><svg><use href="#bulb"/></svg><svg><use href="#sun"/></svg><svg><use href="#unlock"/></svg><span class="size-3.5 border border-black bg-white"></span></div>
            <svg class="pointer-events-none absolute right-0.5 h-1 w-2"><use href="#caret"/></svg>
          </div>
          <div class="mt-px flex h-6 items-center gap-2 pl-[3px] [&_svg]:size-4"><button aria-label="关闭图层"><svg><use href="#l1"/></svg></button><button aria-label="隔离"><svg><use href="#l2"/></svg></button><button aria-label="冻结"><svg><use href="#l3"/></svg></button><button aria-label="锁定"><svg><use href="#l4"/></svg></button><button class="flex items-center gap-[5px]"><svg><use href="#l5"/></svg>置为当前</button></div>
          <div class="flex h-6 items-center gap-2 pl-[3px] [&_svg]:size-4"><button aria-label="打开图层"><svg><use href="#l6"/></svg></button><button aria-label="取消隔离"><svg><use href="#l7"/></svg></button><button aria-label="解冻"><svg><use href="#l8"/></svg></button><button aria-label="解锁"><svg><use href="#l9"/></svg></button><button class="flex items-center gap-[5px]"><svg><use href="#l10"/></svg>匹配图层</button></div>
        </div>
      </div>
      <h2>图层<svg class="h-1 w-2"><use href="#caret"/></svg></h2>
    </section>
    <section class="w-[134px]">
      <div class="flex h-20 pt-[5px]">
        <button class="flex w-[43px] flex-col items-center"><svg class="size-[34px]"><use href="#insert"/></svg><span class="mt-1">插入</span><svg class="mt-1 h-[3px] w-[5px]"><use href="#caret"/></svg></button>
        <div class="pl-0.5 [&_button]:flex [&_button]:h-6 [&_button]:items-center [&_button]:gap-[5px]">
          <button><svg class="size-4"><use href="#create"/></svg>创建</button>
          <button><svg class="size-4"><use href="#editb"/></svg>编辑</button>
          <button><svg class="size-4"><use href="#attr"/></svg>编辑属性<svg class="ml-0.5 h-[3px] w-[5px]"><use href="#caret"/></svg></button>
        </div>
      </div>
      <h2>块<svg class="h-1 w-2"><use href="#caret"/></svg></h2>
    </section>
    <section class="w-[244px]">
      <div class="flex h-20 pt-[5px]">
        <button class="flex w-[43px] flex-col items-center"><svg class="size-[34px]"><use href="#match"/></svg><span class="mt-1">特性</span><span>匹配</span></button>
        <div class="w-[19px] [&_svg]:my-1 [&_svg]:size-4"><svg><use href="#wheel"/></svg><svg class="mt-2!"><use href="#lw"/></svg><svg class="mt-2!"><use href="#lt"/></svg></div>
        <div class="relative flex w-[179px] flex-col gap-px pt-px">
          <div class="relative flex h-[23px] items-center border border-[#262c37] bg-[#4f5b70]">
            <select class="h-full w-full appearance-none bg-transparent pl-[37px] outline-none" aria-label="对象颜色"><option>ByLayer</option></select>
            <span class="pointer-events-none absolute left-[11px] size-4 border border-[#3d4655] bg-white"></span>
            <svg class="pointer-events-none absolute right-0.5 h-1 w-2"><use href="#caret"/></svg>
          </div>
          <div class="relative flex h-[23px] items-center border border-[#262c37] bg-[#4f5b70]">
            <select class="h-full w-full appearance-none bg-transparent pl-[69px] outline-none" aria-label="线宽"><option>ByLayer</option></select>
            <span class="pointer-events-none absolute left-[3px] h-px w-16 bg-white"></span>
            <svg class="pointer-events-none absolute right-0.5 h-1 w-2"><use href="#caret"/></svg>
          </div>
          <div class="relative flex h-[23px] items-center border border-[#262c37] bg-[#4f5b70]">
            <select class="h-full w-full appearance-none bg-transparent pl-[69px] outline-none" aria-label="线型"><option>ByLayer</option></select>
            <span class="pointer-events-none absolute left-[3px] h-px w-16 bg-white"></span>
            <svg class="pointer-events-none absolute right-0.5 h-1 w-2"><use href="#caret"/></svg>
          </div>
          <!-- open linetype list -->
          <div class="absolute left-0 top-[71px] w-[179px] border border-[#262c37] bg-[#4f5b70] shadow-[2px_3px_4px_rgba(0,0,0,0.5)]">
            <ul role="listbox" class="pb-0.5 [&_li]:flex [&_li]:h-[25px] [&_li]:items-center [&_li]:gap-[3px] [&_li]:pl-1.5 [&_li_svg]:h-px [&_li_svg]:w-16">
              <li role="option" aria-selected="true" class="h-6! bg-[#2d3544]"><svg viewBox="0 0 64 1" stroke="#fff"><path d="M0 .5h64"/></svg>ByLayer</li>
              <li role="option"><svg viewBox="0 0 64 1" stroke="#fff"><path d="M0 .5h64"/></svg>ByBlock</li>
              <li role="option"><svg viewBox="0 0 64 1" stroke="#fff"><path d="M0 .5h64"/></svg>Continuous</li>
              <li role="option"><svg viewBox="0 0 64 1" stroke="#fff"><path d="M0 .5h22M33 .5h22"/></svg>DASHED</li>
            </ul>
            <button class="block h-[27px] w-full border border-[#4f5b70] bg-[#222831] pl-[3px] text-left outline outline-[#262c37]">其他...</button>
          </div>
        </div>
      </div>
    </section>
    <section class="w-[68px]">
      <div class="flex h-20 pt-[5px]">
        <button class="flex w-[41px] flex-col items-center"><svg class="size-[34px]"><use href="#group"/></svg><span class="mt-1">组</span></button>
        <div class="[&_button]:flex [&_button]:h-6 [&_button]:w-6 [&_button]:items-center [&_button]:justify-center [&_svg]:size-4">
          <button aria-label="解除编组"><svg><use href="#ungrp"/></svg></button>
          <button aria-label="组编辑"><svg><use href="#grped"/></svg></button>
          <button aria-label="启用组选择" class="border border-[#7ab8e8] bg-[#3a5372]"><svg><use href="#grpsel"/></svg></button>
        </div>
      </div>
      <h2>组<svg class="h-1 w-2"><use href="#caret"/></svg></h2>
    </section>
    <section class="w-[76px]">
      <div class="flex h-20 pt-[5px]">
        <button class="flex w-[50px] flex-col items-center"><svg class="size-[34px]"><use href="#ruler"/></svg><span class="mt-1">测量</span><svg class="mt-1 h-[3px] w-[5px]"><use href="#caret"/></svg></button>
        <div class="pl-[3px] [&_button]:flex [&_button]:h-6 [&_button]:items-center [&_svg]:size-4">
          <button aria-label="快速选择"><svg><use href="#qsel"/></svg></button>
          <button aria-label="全部选择"><svg><use href="#selall"/></svg></button>
          <button aria-label="快速计算器"><svg><use href="#calc"/></svg></button>
        </div>
      </div>
      <h2>实用工具<svg class="h-1 w-2"><use href="#caret"/></svg></h2>
    </section>
    <section class="w-[76px] border-r-0!">
      <div class="flex h-20 pt-[5px]">
        <button class="flex w-[50px] flex-col items-center"><svg class="size-[34px]"><use href="#paste"/></svg><span class="mt-1">粘贴</span><svg class="mt-1 h-[3px] w-[5px]"><use href="#caret"/></svg></button>
        <div class="pl-[3px] [&_button]:flex [&_button]:h-6 [&_button]:items-center [&_svg]:size-4">
          <button aria-label="剪切"><svg><use href="#cut"/></svg></button>
          <button aria-label="复制到剪贴板"><svg><use href="#clip"/></svg></button>
        </div>
      </div>
      <h2>剪贴板</h2>
    </section>
  </div>

  <!-- file tabs -->
  <div class="ml-[3px] mt-1 flex h-[26px] shrink-0 items-start border-b-4 border-[#3b4453] pl-4">
    <a href="#" class="flex h-[22px] w-[125px] items-center rounded-t-lg bg-[#303743] pl-[15px] text-[#c4c8ce] [clip-path:polygon(10px_0,100%_0,100%_100%,0_100%)]">开始</a>
    <a href="#" class="flex h-[22px] w-[128px] items-center justify-between rounded-t-lg bg-[#3b4453] pl-[13px] pr-[14px] font-bold text-white [clip-path:polygon(8px_0,120px_0,100%_100%,0_100%)]">Drawing1*<svg class="size-2.5 text-[#b9bdc4]"><use href="#x"/></svg></a>
    <button class="ml-1 mt-[3px] flex h-[17px] w-6 items-center justify-center rounded-tr-lg bg-[#303743] text-[#b9bdc4]" aria-label="新图形"><svg class="size-2.5"><use href="#plus"/></svg></button>
  </div>

  <div class="ml-[3px] flex min-h-0 flex-1">
    <!-- draw toolbar -->
    <aside class="w-7 shrink-0 bg-[#3b4453]">
      <div class="w-6 border-b border-r border-[#2a303b] pb-px pl-[3px] pt-1 [&_button]:flex [&_button]:h-[22px] [&_button]:items-center [&_svg]:size-4">
        <div class="h-[5px] w-3.5 border-y-2 border-dotted border-[#aeb4bd]"></div>
        <button aria-label="直线"><svg><use href="#t1"/></svg></button>
        <button aria-label="构造线"><svg><use href="#t2"/></svg></button>
        <button aria-label="多段线"><svg><use href="#t3"/></svg></button>
        <button aria-label="多边形"><svg><use href="#t4"/></svg></button>
        <button aria-label="矩形"><svg><use href="#rect"/></svg></button>
        <button aria-label="圆弧"><svg><use href="#t6"/></svg></button>
        <button aria-label="圆"><svg><use href="#t7"/></svg></button>
        <button aria-label="修订云线"><svg><use href="#t8"/></svg></button>
        <button aria-label="样条曲线"><svg><use href="#t9"/></svg></button>
        <button aria-label="椭圆"><svg><use href="#ell"/></svg></button>
        <button aria-label="椭圆弧"><svg><use href="#t11"/></svg></button>
        <button aria-label="插入块"><svg><use href="#t12"/></svg></button>
        <button aria-label="创建块"><svg><use href="#create"/></svg></button>
        <button aria-label="点"><svg><use href="#t14"/></svg></button>
        <button aria-label="图案填充"><svg><use href="#hatch"/></svg></button>
        <button aria-label="渐变色"><svg><use href="#t16"/></svg></button>
        <button aria-label="面域"><svg><use href="#t17"/></svg></button>
        <button aria-label="表格"><svg><use href="#table"/></svg></button>
        <button class="w-4 justify-center font-['Inter',sans-serif] text-lg font-medium">A</button>
        <button aria-label="添加选定对象"><svg><use href="#t20"/></svg></button>
      </div>
    </aside>

    <!-- drawing area -->
    <main class="relative min-w-0 flex-1 overflow-hidden bg-[#212830]">
      <svg class="absolute inset-0 h-full w-full" shape-rendering="crispEdges">
        <path d="M389 233.500h447" stroke="#2f6fc0" stroke-width="3"/><path d="M389 233.500h447" stroke="#fff"/>
        <path d="M384 228h11v11h-11zM607 228h11v11h-11zM830 228h11v11h-11z" fill="#1376d8"/>
        <path d="M891 535.500h600.500V234M891 549.500h614.500V234" stroke="#e4e6e8"/>
      </svg>
      <span class="absolute left-1 top-1.5 text-[#06080a]">[−][俯视][二维线框]</span>

      <!-- view cube -->
      <div class="absolute right-[23px] top-[21px] size-[122px] text-lg leading-none text-[#c3c6ca]">
        <div class="size-full rounded-full border-[13px] border-[#42474f]"></div>
        <div class="absolute left-[35px] top-[35px] flex size-[52px] items-center justify-center border border-[#c9cbcd] bg-[#a9acaf]"><span class="flex size-8 items-center justify-center bg-[#9aa4ad] text-2xl text-[#4f565e]">上</span></div>
        <span class="absolute -top-1 left-[52px]">北</span><span class="absolute bottom-[-7px] left-[52px]">南</span><span class="absolute -left-1.5 top-[52px]">西</span><span class="absolute -right-1 top-[52px]">东</span>
      </div>
      <button class="absolute right-[60px] top-[168px] flex h-[18px] w-12 items-center gap-1 rounded border border-[#a3a7b3] bg-[#8b909d] pl-1 font-['Liberation_Sans',sans-serif] text-[11px] text-[#3c424e]">WCS<svg class="h-1 w-2 text-[#b4b8c2]"><use href="#caret"/></svg></button>

      <!-- navigation bar -->
      <div class="absolute right-[5px] top-[212px] h-[212px] w-8 rounded border border-[#70757a] bg-[#5b6065]">
        <svg class="h-full w-full" viewBox="0 0 30 210" stroke="#3e4348" stroke-width="1.300"><circle cx="25" cy="5" r="3"/><circle cx="25" cy="205" r="3"/><path d="M26 19v11a11 11 0 1 1-11-11z"/><circle cx="15" cy="30" r="6"/><path d="M13 49h4l-2 2zM13 118h4l-2 2zM13 156h4l-2 2z" fill="#3e4348"/><path d="M10 82c-2-6-6-6-5-9 3-1 4 3 5 3l-1-12c2-2 3 0 3 1l1 5 1-7c2-2 3-1 3 1v7l3-6c2-1 3 0 2 2l-2 6 3-3c2 0 2 2 1 3-3 5-2 9-6 11zM4 89l14 13M18 89L5 102M4 93v-4h4M14 89h4v4M4 98v4h4"/><circle cx="19" cy="104" r="4"/><path d="M22 107l4 4" stroke-width="2.500"/><path d="M13 148v-16h-2l4-5 4 5h-2v16zM5 140c-3-4 3-6 8-6M19 134c10 1 9 8-1 8H8M10 139l-4 3 4 3"/><path d="M3.500 168.500h5v6h-5zM11.500 168.500h5v6h-5zM19.500 168.500h5v6h-5zM3.500 177.500h15v14h-15z"/><path d="M9 181l5 3-3 5z" fill="#3e4348"/></svg>
      </div>

      <!-- properties palette -->
      <div class="absolute left-[77px] top-[97px] flex w-[267px] border border-[#2c323d] bg-[#2f343f]">
        <div class="flex w-6 shrink-0 flex-col items-center pt-1 text-[#c6c9ce]">
          <button aria-label="关闭"><svg class="size-2.5"><use href="#x"/></svg></button>
          <button aria-label="自动隐藏" class="mt-[9px]"><svg class="size-2.5" viewBox="0 0 10 10"><path d="M1 0h2v10H1zM3 5l2-3v6zM10 0v10L5 5z" fill="currentColor"/></svg></button>
          <button aria-label="特性" class="mt-[9px]"><svg class="size-2.5"><use href="#gear"/></svg></button>
          <span class="mt-auto h-6 rotate-180 leading-3 [writing-mode:vertical-rl]">特性</span>
          <svg class="mt-[9px] h-4 w-3" viewBox="0 0 12 16"><path d="M0 0h12v16H0z" fill="#e8eaec"/><path d="M1.500 1.500h9v6h-9z" fill="#7ec3f0" stroke="#222"/><path d="M2 11h8M2 14h8M4 9v3M8 12v4" stroke="#444"/></svg>
        </div>
        <div class="my-0.5 mr-[3px] flex-1 border border-[#2a303b] bg-[#3b4453] pb-1.5 pl-[18px] pr-3 pt-3">
          <div class="flex h-[22px] items-center gap-2 [&_button_svg]:size-4">
            <div class="relative flex h-[22px] w-[136px] items-center border border-[#2a303b] bg-[#4f5b70]">
              <select class="h-full w-full appearance-none bg-transparent pl-[3px] outline-none" aria-label="选定对象"><option>直线</option></select>
              <svg class="pointer-events-none absolute right-0.5 h-1 w-2"><use href="#caret"/></svg>
            </div>
            <button aria-label="切换 PICKADD"><svg><use href="#tog"/></svg></button><button aria-label="选择对象"><svg><use href="#selall"/></svg></button><button aria-label="快速选择"><svg><use href="#qsel"/></svg></button>
          </div>
          <div class="mt-1 flex flex-col gap-[3px] [&_h3]:flex [&_h3]:h-[22px] [&_h3]:items-center [&_h3]:justify-between [&_h3]:bg-[#2f333e] [&_h3]:pl-[7px] [&_h3]:pr-2 [&_h3]:font-bold [&_table]:ml-[17px] [&_table]:w-48 [&_table]:table-fixed [&_table]:border-separate [&_table]:border-spacing-0 [&_table]:border-x [&_table]:border-[#2c323d] [&_td]:border-b [&_td]:border-l [&_td]:border-[#2c323d] [&_td]:pl-0.5 [&_td]:pt-1 [&_td]:leading-4 [&_th]:w-[83px] [&_th]:border-b [&_th]:border-[#2c323d] [&_th]:pl-1.5 [&_th]:text-left [&_th]:font-normal [&_th]:text-[#d3d6da]">
            <div>
              <h3>常规<svg class="h-1 w-2"><use href="#caret"/></svg></h3>
              <table>
                <tr><th>颜色</th><td><span class="flex h-4 items-center gap-[7px]"><span class="size-3.5 border border-black bg-white"></span>ByLayer</span></td></tr>
                <tr><th>图层</th><td>0</td></tr>
                <tr><th class="text-white!">线型</th><td class="h-[21px] p-0!"><div class="relative ml-px flex h-[18px] items-center border border-[#2a303b] bg-[#566176]"><select class="h-full w-full appearance-none bg-transparent pl-[46px] outline-none" aria-label="线型"><option>ByLa...</option></select><span class="pointer-events-none absolute left-[5px] h-px w-9 bg-white"></span><svg class="pointer-events-none absolute right-[3px] h-1 w-2"><use href="#caret"/></svg></div></td></tr>
                <tr><th>线型比例</th><td>1</td></tr>
                <tr><th>打印样式</th><td class="text-[#8d939d]">ByColor</td></tr>
                <tr><th>线宽</th><td><span class="flex h-4 items-center gap-1"><span class="h-px w-12 bg-white"></span>ByLayer</span></td></tr>
                <tr><th>透明度</th><td>ByLayer</td></tr>
                <tr><th>超链接</th><td>&nbsp;</td></tr>
                <tr><th>厚度</th><td>0</td></tr>
              </table>
            </div>
            <div>
              <h3>三维效果<svg class="h-1 w-2"><use href="#caret"/></svg></h3>
              <table><tr><th>材质</th><td>ByLayer</td></tr></table>
            </div>
            <div>
              <h3>几何图形<svg class="h-1 w-2"><use href="#caret"/></svg></h3>
              <table>
                <tr><th>起点 X 坐标</th><td>533.6024</td></tr>
                <tr><th>起点 Y 坐标</th><td>800.9453</td></tr>
                <tr><th>起点 Z 坐标</th><td>0</td></tr>
                <tr><th>端点 X 坐标</th><td>1144.6717</td></tr>
                <tr><th>端点 Y 坐标</th><td>800.9453</td></tr>
                <tr><th>端点 Z 坐标</th><td>0</td></tr>
                <tr class="text-[#8d939d]"><th>增量 X</th><td>611.0693</td></tr>
                <tr class="text-[#8d939d]"><th>增量 Y</th><td>0</td></tr>
                <tr class="text-[#8d939d]"><th>增量 Z</th><td>0</td></tr>
                <tr class="text-[#8d939d]"><th>长度</th><td>611.0693</td></tr>
                <tr class="text-[#8d939d]"><th>角度</th><td>0</td></tr>
              </table>
            </div>
          </div>
        </div>
      </div>

      <!-- UCS icon -->
      <svg class="absolute bottom-0 left-3 h-[92px] w-[84px]" stroke="#fff" shape-rendering="crispEdges"><path d="M7.500 22v48.500H58M4.500 65.500h8v9h-8z"/><g fill="#fff" stroke="none" font-family="Lato" font-weight="300" font-size="19"><text x="9" y="17">Y</text><text x="61" y="69">X</text></g></svg>

      <!-- command line -->
      <div class="absolute bottom-0 left-[377px] right-[377px] flex h-[26px] items-center bg-[#2c313c]">
        <svg class="ml-1 h-4 w-[5px]" viewBox="0 0 5 16"><path d="M1 0v16M4 0v16" stroke="#c6c9ce" stroke-width="2" stroke-dasharray="2 1"/></svg>
        <button class="ml-[5px] text-[#c6c9ce]" aria-label="关闭"><svg class="size-2.5"><use href="#x"/></svg></button>
        <button class="ml-[11px]" aria-label="自定义"><svg class="size-4"><use href="#wrench"/></svg></button>
        <label class="ml-[5px] flex h-[25px] flex-1 items-center self-start bg-[#bcbdbd] px-1 text-[#4b4e52]">
          <svg class="h-3.5 w-4" viewBox="0 0 16 14" stroke="#4b4e52"><path d="M.5 1.500h15v12H.5zM0 3h16M3 6l3 2-3 2M7 10.500h4"/></svg>
          <svg class="ml-0.5 h-1 w-2"><use href="#caret"/></svg>
          <input class="ml-2 min-w-0 flex-1 italic outline-none placeholder:text-[#5c5f63]" placeholder="键入命令" aria-label="键入命令">
          <svg class="h-1 w-2 rotate-180"><use href="#caret"/></svg>
        </label>
      </div>

      <!-- input method badge -->
      <div class="absolute bottom-[18px] right-[448px] flex h-[33px] w-[68px] items-center justify-center bg-black"><div class="flex h-[25px] w-[60px] items-center justify-center gap-1 rounded bg-white text-[#222]">CH<svg class="h-3 w-2.5" viewBox="0 0 10 12" stroke="#222"><path d="M4 .5c6 2 7 9-3 11 4-4 5-6 3-11z"/></svg>简</div></div>
    </main>
  </div>

  <!-- layout tabs and status bar -->
  <footer class="flex h-[22px] shrink-0 border-t border-[#3b4453] text-[#c4c8ce]">
    <nav class="flex h-[17px] items-center pl-3.5 leading-none">
      <a href="#" class="flex h-full w-[46px] items-center justify-center bg-[#3b4453] font-bold text-white [clip-path:polygon(0_0,100%_0,40px_100%,6px_100%)]">模型</a>
      <a href="#" class="ml-1 flex h-full w-[50px] items-center justify-center bg-[#2c333e]">布局1</a>
      <a href="#" class="ml-1 flex h-full w-[50px] items-center justify-center bg-[#2c333e]">布局2</a>
      <button class="ml-1 flex h-full w-6 items-center justify-center rounded-br-lg bg-[#2c333e]" aria-label="新布局"><svg class="size-2.5"><use href="#plus"/></svg></button>
    </nav>
    <div class="ml-auto flex items-center bg-[#3b4453] pr-1 pt-[3px] text-[#e3e6ea] [&_button]:flex [&_button]:h-5 [&_button]:w-6 [&_button]:shrink-0 [&_button]:items-center [&_button]:justify-center [&_button_svg]:h-5 [&_button_svg]:w-[22px]">
      <span class="w-[183px] pl-4 font-['Roboto',sans-serif] text-[#d3d6da]">1576.2565, 1077.5110, 0.0000</span>
      <span class="w-8 text-center font-bold">模型</span>
      <button aria-label="栅格"><svg><use href="#s1"/></svg></button>
      <button aria-label="捕捉"><svg><use href="#s2"/></svg></button>
      <span class="flex w-4 justify-center"><svg class="h-[5px] w-2"><use href="#caret"/></svg></span>
      <button class="ml-1" aria-label="推断约束"><svg><use href="#s3"/></svg></button>
      <button aria-label="动态输入"><svg class="bg-[#5b8bc4]"><use href="#s4"/></svg></button>
      <button aria-label="正交"><svg><use href="#s5"/></svg></button>
      <button aria-label="极轴追踪"><svg><use href="#s6"/></svg></button>
      <span class="flex w-4 justify-center"><svg class="h-[5px] w-2"><use href="#caret"/></svg></span>
      <button aria-label="等轴测草图"><svg><use href="#s7"/></svg></button>
      <span class="flex w-4 justify-center"><svg class="h-[5px] w-2"><use href="#caret"/></svg></span>
      <button class="ml-0.5" aria-label="对象捕捉追踪"><svg class="bg-[#5b8bc4]"><use href="#s8"/></svg></button>
      <button aria-label="对象捕捉"><svg><use href="#s9"/></svg></button>
      <span class="flex w-4 justify-center"><svg class="h-[5px] w-2"><use href="#caret"/></svg></span>
      <button class="ml-0.5" aria-label="线宽"><svg><use href="#s10"/></svg></button>
      <button aria-label="透明度"><svg class="bg-[#5b8bc4]"><use href="#s11"/></svg></button>
      <button aria-label="选择循环"><svg><use href="#s12"/></svg></button>
      <button class="ml-0.5" aria-label="三维对象捕捉"><svg><use href="#s13"/></svg></button>
      <span class="flex w-4 justify-center"><svg class="h-[5px] w-2"><use href="#caret"/></svg></span>
      <button class="ml-1" aria-label="动态 UCS"><svg class="bg-[#5b8bc4]"><use href="#s14"/></svg></button>
      <button aria-label="选择过滤"><svg><use href="#s15"/></svg></button>
      <span class="flex w-4 justify-center"><svg class="h-[5px] w-2"><use href="#caret"/></svg></span>
      <button aria-label="小控件"><svg class="bg-[#5b8bc4]"><use href="#s16"/></svg></button>
      <span class="flex w-4 justify-center"><svg class="h-[5px] w-2"><use href="#caret"/></svg></span>
      <button class="ml-1" aria-label="注释可见性"><svg class="bg-[#5b8bc4]"><use href="#s17"/></svg></button>
      <button aria-label="自动缩放"><svg><use href="#s18"/></svg></button>
      <button aria-label="注释比例"><svg><use href="#man"/></svg></button>
      <span class="w-[58px] whitespace-nowrap text-center font-['Roboto',sans-serif]">1:1 / 100%</span>
      <span class="flex w-4 justify-center"><svg class="h-[5px] w-2"><use href="#caret"/></svg></span>
      <button class="ml-0.5 [&_svg]:size-4!" aria-label="切换工作空间"><svg><use href="#gear"/></svg></button>
      <span class="flex w-4 justify-center"><svg class="h-[5px] w-2"><use href="#caret"/></svg></span>
      <button class="ml-0.5" aria-label="注释监视器"><svg><use href="#s20"/></svg></button>
      <button class="ml-0.5" aria-label="单位"><svg><use href="#s21"/></svg></button>
      <span class="w-14 pl-1.5">小数</span>
      <span class="flex w-4 justify-center"><svg class="h-[5px] w-2"><use href="#caret"/></svg></span>
      <button class="ml-0.5" aria-label="快捷特性"><svg><use href="#s22"/></svg></button>
      <button class="ml-1" aria-label="锁定用户界面"><svg><use href="#s23"/></svg></button>
      <span class="flex w-4 justify-center"><svg class="h-[5px] w-2"><use href="#caret"/></svg></span>
      <button aria-label="隔离对象"><svg><use href="#s24"/></svg></button>
      <button class="ml-1" aria-label="图形性能"><svg class="bg-[#5b8bc4]"><use href="#s25"/></svg></button>
      <button class="ml-0.5" aria-label="全屏显示"><svg><use href="#s26"/></svg></button>
      <button aria-label="自定义"><svg><use href="#s27"/></svg></button>
    </div>
  </footer>
</div>

<!-- tooltip, pointer and annotation arrows -->
<div class="absolute left-[1179px] top-[300px] z-30 h-[66px] w-[138px] rounded-sm bg-[#eeeeee] px-1 pt-2 font-medium text-[#3c3f44]">
  <p class="border-b border-[#b5b5b5] pb-2 pl-1">其他...</p>
  <p class="whitespace-nowrap pl-1 pt-2">按 <b>F1</b> 键获得更多帮助</p>
</div>
<svg class="absolute left-[1174px] top-[274px] z-40 h-5 w-3" viewBox="0 0 12 20"><path d="M0 0v16l4-4 3 6 3-1-3-6h5z" fill="#fff" stroke="#111" stroke-width=".5"/></svg>
<svg class="pointer-events-none absolute left-[1200px] top-[140px] z-30 h-[140px] w-[140px] drop-shadow-[2px_2px_1px_rgba(0,0,0,0.6)]" viewBox="0 0 140 140"><path d="M55 21l73 47M24 122l101-3" stroke="#f30b0b" stroke-width="2.500" stroke-linecap="round"/><path d="M37 9l28 8-10 16zM2 123l26-7v12z" fill="#f30b0b"/></svg>

<!-- site watermark -->
<div class="pointer-events-none absolute bottom-2 right-4 z-30 flex h-[50px] w-[182px] items-start" aria-hidden="true">
  <svg class="h-[50px] w-[76px] shrink-0" viewBox="0 0 76 50"><path d="M16 1h14l8 11L50 1h14L42 20l14 21H40L30 28 2 50l20-28z" fill="#9a9fa6"/><path d="M48 16c-12 8-8 26 6 20" stroke="#2f7fc0" stroke-width="4"/><path d="M42 50c18 0 32-10 30-24" stroke="#4a9a3c" stroke-width="5"/><path d="M54 36c4-8 10-6 12-2" stroke="#c9b43c" stroke-width="3"/></svg>
  <div class="-ml-3"><p class="mt-1 whitespace-nowrap text-[29px] font-black italic leading-6 text-[#a3a8af]">自由互联</p><p class="ml-5 mt-2 font-['Liberation_Sans',sans-serif] text-base font-bold leading-4 text-[#3f8f4a]/70">www.xz7.com</p></div>
</div>
</body>
</html>
